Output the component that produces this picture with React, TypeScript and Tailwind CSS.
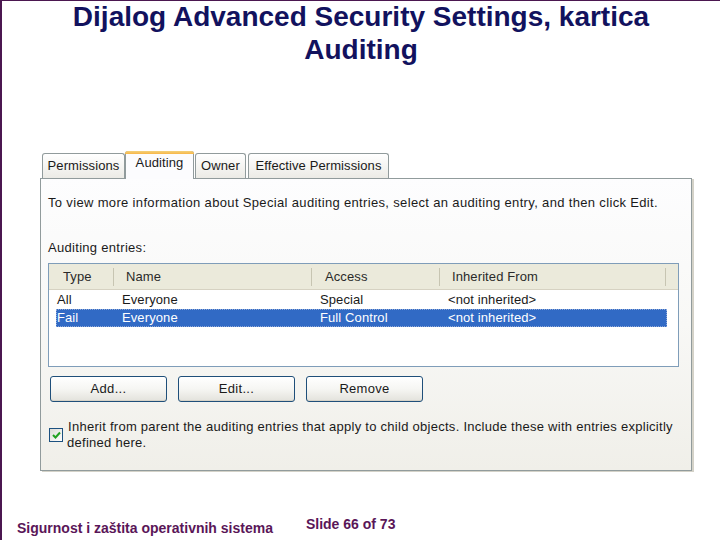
const F = "font-['Liberation_Sans',Arial,sans-serif]";

function Tab({ label, w, selected }: { label: string; w: string; selected?: boolean }) {
  if (selected) {
    return (
      <div
        className={`${w} h-[28px] -mb-px relative z-10 border border-b-0 border-[#919b9c] rounded-t-[3px] bg-[#fcfcfe] flex flex-col`}
      >
        <div className="h-[3px] -mt-px -mx-px rounded-t-[3px] bg-gradient-to-b from-[#f3d17a] to-[#f8b646]" />
        <div className="flex-1 flex items-start justify-center pt-[1px] text-[13px] leading-[16px] text-[#1a1a1a]">
          {label}
        </div>
      </div>
    );
  }
  return (
    <div
      className={`${w} h-[25px] border border-b-0 border-[#919b9c] rounded-t-[3px] bg-gradient-to-b from-white to-[#ecebe6] flex items-center justify-center text-[13px] leading-[16px] text-[#1a1a1a]`}
    >
      {label}
    </div>
  );
}

function Btn({ label }: { label: string }) {
  return (
    <div className="w-[117px] h-[26px] rounded-[3px] border border-[#1f4f7a] bg-gradient-to-b from-white via-[#f6f6f3] to-[#e3e2dc] flex items-center justify-center text-[13px] text-[#1a1a1a] shadow-[inset_0_-1px_0_#d6d3c8]">
      {label}
    </div>
  );
}

export default function App() {
  return (
    <div className={`w-[720px] h-[540px] bg-white border-l-2 border-t border-[#4b1750] flex flex-col overflow-hidden ${F}`}>
      <h1 className="text-center font-bold text-[28px] leading-[33px] text-[#12125e] -mt-[1px]">
        Dijalog Advanced Security Settings, kartica
        <br />
        Auditing
      </h1>

      <div className="ml-[38px] mt-[84px] w-[652px] tracking-[0.3px]">
        {/* tabs */}
        <div className="flex items-end pl-[2px] h-[28px] tracking-[0.1px]">
          <Tab label="Permissions" w="w-[83px]" />
          <Tab label="Auditing" w="w-[69px]" selected />
          <div className="w-[1px]" />
          <Tab label="Owner" w="w-[51px]" />
          <div className="w-[2px]" />
          <Tab label="Effective Permissions" w="w-[141px]" />
        </div>

        {/* panel */}
        <div className="h-[293px] w-[652px] border border-[#919b9c] bg-gradient-to-b from-[#fdfdfe] via-[#f8f8f6] to-[#f0efe9] shadow-[2px_1px_0_#d4d2c8] flex flex-col text-[#1a1a1a] text-[13px] leading-[16px]">
          <div className="pl-[7px] pt-[16px] tracking-[0.34px]">
            To view more information about Special auditing entries, select an auditing entry, and then click Edit.
          </div>
          <div className="pl-[7px] mt-[29px]">Auditing entries:</div>

          {/* list */}
          <div className="ml-[7px] mt-[7px] w-[631px] h-[104px] border border-[#7f9db9] bg-white flex flex-col tracking-[0.1px]">
            <div className="h-[26px] bg-[#ebeadb] border-b border-[#d6d2c2] flex items-center text-[#2a2a2a]">
              <div className="w-[64px] h-full flex items-center pl-[14px]">Type</div>
              <div className="w-px h-[18px] bg-[#c7c5b2]" />
              <div className="w-[197px] h-full flex items-center pl-[12px]">Name</div>
              <div className="w-px h-[18px] bg-[#c7c5b2]" />
              <div className="w-[127px] h-full flex items-center pl-[13px]">Access</div>
              <div className="w-px h-[18px] bg-[#c7c5b2]" />
              <div className="w-[225px] h-full flex items-center pl-[12px]">Inherited From</div>
              <div className="w-px h-[18px] bg-[#c7c5b2]" />
            </div>
            <div className="ml-[7px] mt-[1px] w-[611px] h-[18px] flex items-center">
              <div className="w-[57px] pl-[1px]">All</div>
              <div className="w-[198px] pl-[9px]">Everyone</div>
              <div className="w-[128px] pl-[9px]">Special</div>
              <div className="pl-[9px]">&lt;not inherited&gt;</div>
            </div>
            <div className="ml-[7px] w-[611px] h-[18px] flex items-center bg-[#316ac5] text-white border border-dotted border-[#8fa8d8]">
              <div className="w-[56px]">Fail</div>
              <div className="w-[198px] pl-[9px]">Everyone</div>
              <div className="w-[128px] pl-[9px]">Full Control</div>
              <div className="pl-[9px]">&lt;not inherited&gt;</div>
            </div>
          </div>

          {/* buttons */}
          <div className="flex gap-[11px] ml-[9px] mt-[9px]">
            <Btn label="Add..." />
            <Btn label="Edit..." />
            <Btn label="Remove" />
          </div>

          {/* checkbox */}
          <div className="flex items-center ml-[8px] mt-[17px]">
            <div className="w-[14px] h-[14px] shrink-0 border border-[#1c5180] bg-gradient-to-br from-[#dcdcd7] to-white flex items-center justify-center">
              <svg width="9" height="8" viewBox="0 0 9 8">
                <path d="M1 4 L3.5 6.5 L8 1.5" stroke="#21a121" strokeWidth="2" fill="none" />
              </svg>
            </div>
            <div className="ml-[5px] leading-[16px] tracking-[0.27px]">
              Inherit from parent the auditing entries that apply to child objects. Include these with entries explicitly
              <br />
              <span className="-ml-[1px]">defined here.</span>
            </div>
          </div>
        </div>
      </div>

      {/* footer */}
      <div className="mt-auto flex items-start h-[30px] text-[#5a1658] font-bold text-[14px] leading-[16px]">
        <div className="ml-[15px] mt-[10px]">Sigurnost i zaštita operativnih sistema</div>
        <div className="ml-[33px] mt-[6px]">Slide 66 of 73</div>
      </div>
    </div>
  );
}
